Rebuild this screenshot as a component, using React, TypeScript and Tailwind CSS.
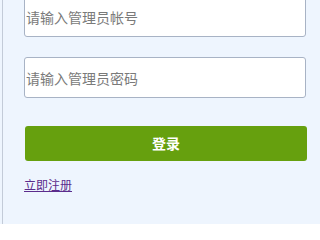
const App = () => {
  return (
    <div
      className="flex h-[224px] w-[320px] overflow-hidden bg-[#eef5fe] pl-[2px]"
      style={{ fontFamily: '"Noto Sans CJK SC", "Liberation Sans", sans-serif' }}
    >
      <div className="flex-1 self-stretch border-l border-[#c3cbd8] pl-[21px] pr-[13px]">
        <div className="-mt-[4px] flex flex-col">
          <input
            type="text"
            placeholder="请输入管理员帐号"
            className="h-[41px] w-[282px] rounded-[3px] border border-[#a8b3c5] bg-white px-[1px] text-[14px] text-[#333] placeholder:text-[#7a7a7a] outline-none"
          />
          <input
            type="password"
            placeholder="请输入管理员密码"
            className="mt-[20px] h-[41px] w-[282px] rounded-[3px] border border-[#a8b3c5] bg-white px-[1px] text-[14px] text-[#333] placeholder:text-[#7a7a7a] outline-none"
          />
          <button className="ml-[1px] mt-[28px] h-[35px] w-[282px] rounded-[3px] bg-[#66a00e] text-[14px] font-bold text-white">
            登录
          </button>
          <div className="mt-[10px]">
            <a href="#" className="text-[12px] text-[#5b2c8c] underline">
              立即注册
            </a>
          </div>
        </div>
      </div>
    </div>
  );
};

export default App;
